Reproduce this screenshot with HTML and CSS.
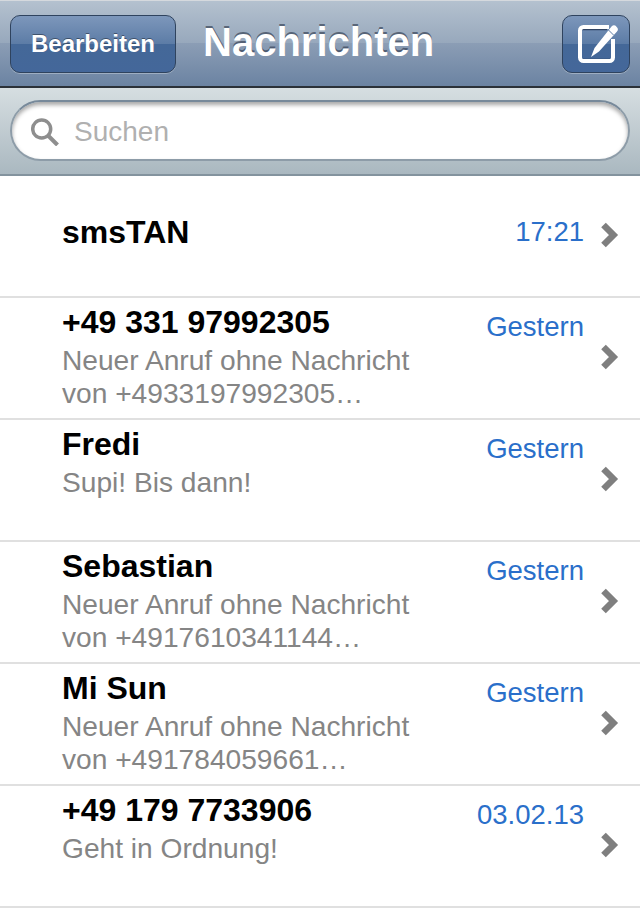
FILE: index.html
```html
<!DOCTYPE html>
<html lang="de">
<head>
    <meta charset="utf-8">
    <title>Nachrichten</title>
    <link rel="stylesheet" href="styles.css">
</head>
<body>
    <header class="navbar">
        <button class="nav-btn edit-btn">Bearbeiten</button>
        <h1 class="nav-title">Nachrichten</h1>
        <button class="nav-btn compose-btn" aria-label="Neue Nachricht">
            <svg width="68" height="58" viewBox="0 0 68 58">
                <path d="M20 14.500H45M20 44.500H49" stroke="#2f4363" stroke-width="1.500"/>
                <path d="M47 12H21.500a3.500 3.500 0 0 0-3.500 3.500v27a3.500 3.500 0 0 0 3.500 3.500h26a3.500 3.500 0 0 0 3.500-3.500V24" fill="none" stroke="#fff" stroke-width="4"/>
                <path d="M49.500 11.500a3.500 3.500 0 0 1 5 .200 3.500 3.500 0 0 1 .300 5L37 36.500 29 42l3.500-9z" fill="#fff"/>
                <path d="M46.500 15l5 5" stroke="#5b7ba5" stroke-width="1"/>
            </svg>
        </button>
    </header>

    <div class="searchbar">
        <div class="search-field">
            <svg class="search-icon" width="28" height="28" viewBox="0 0 28 28">
                <circle cx="10.700" cy="11" r="9" fill="none" stroke="#8e8e8e" stroke-width="3.500"/>
                <path d="M17 17.500l9.500 9.500" stroke="#8e8e8e" stroke-width="4"/>
            </svg>
            <span>Suchen</span>
        </div>
    </div>

    <ul class="list">
        <li class="row single">
            <div class="text"><div class="name">smsTAN</div></div>
            <div class="date">17:21</div>
            <svg class="chevron" width="18" height="26" viewBox="0 0 18 26"><path d="M2.500 3L12.500 13 2.500 23" fill="none" stroke="#7f7f7f" stroke-width="6.500"/></svg>
        </li>
        <li class="row">
            <div class="text">
                <div class="name">+49 331 97992305</div>
                <div class="preview">Neuer Anruf ohne Nachricht<br>von +4933197992305…</div>
            </div>
            <div class="date">Gestern</div>
            <svg class="chevron" width="18" height="26" viewBox="0 0 18 26"><path d="M2.500 3L12.500 13 2.500 23" fill="none" stroke="#7f7f7f" stroke-width="6.500"/></svg>
        </li>
        <li class="row">
            <div class="text">
                <div class="name">Fredi</div>
                <div class="preview">Supi! Bis dann!</div>
            </div>
            <div class="date">Gestern</div>
            <svg class="chevron" width="18" height="26" viewBox="0 0 18 26"><path d="M2.500 3L12.500 13 2.500 23" fill="none" stroke="#7f7f7f" stroke-width="6.500"/></svg>
        </li>
        <li class="row">
            <div class="text">
                <div class="name">Sebastian</div>
                <div class="preview">Neuer Anruf ohne Nachricht<br>von +4917610341144…</div>
            </div>
            <div class="date">Gestern</div>
            <svg class="chevron" width="18" height="26" viewBox="0 0 18 26"><path d="M2.500 3L12.500 13 2.500 23" fill="none" stroke="#7f7f7f" stroke-width="6.500"/></svg>
        </li>
        <li class="row">
            <div class="text">
                <div class="name">Mi Sun</div>
                <div class="preview">Neuer Anruf ohne Nachricht<br>von +491784059661…</div>
            </div>
            <div class="date">Gestern</div>
            <svg class="chevron" width="18" height="26" viewBox="0 0 18 26"><path d="M2.500 3L12.500 13 2.500 23" fill="none" stroke="#7f7f7f" stroke-width="6.500"/></svg>
        </li>
        <li class="row">
            <div class="text">
                <div class="name">+49 179 7733906</div>
                <div class="preview">Geht in Ordnung!</div>
            </div>
            <div class="date">03.02.13</div>
            <svg class="chevron" width="18" height="26" viewBox="0 0 18 26"><path d="M2.500 3L12.500 13 2.500 23" fill="none" stroke="#7f7f7f" stroke-width="6.500"/></svg>
        </li>
    </ul>
</body>
</html>
```
FILE: styles.css
```css
* {
    box-sizing: border-box;
}

body {
    margin: 0;
    font-family: "Liberation Sans", Arial, sans-serif;
    background-color: #fff;
}

.navbar {
    display: flex;
    align-items: center;
    justify-content: space-between;
    height: 88px;
    padding: 0 10px;
    border-top: 1px solid #d5d9de;
    border-bottom: 2px solid #2b3138;
    background: linear-gradient(#b4c1cf, #97a8bc 50%, #8b9db5 50%, #6b83a2);
}

.nav-btn {
    height: 58px;
    padding: 0;
    border: 1px solid #2f435e;
    border-radius: 10px;
    background: linear-gradient(#7d97bb, #5c7ca6 50%, #446898 50%, #44679a);
    box-shadow: 0 1px 0 rgba(255,255,255,0.3);
    color: #fff;
}

.edit-btn {
    width: 166px;
    font-family: inherit;
    font-size: 24px;
    font-weight: bold;
    text-shadow: 0 -1px 0 rgba(0,0,0,0.4);
}

.compose-btn {
    width: 68px;
}

.compose-btn svg {
    display: block;
    margin: -1px;
}

.nav-title {
    flex: 1;
    margin: 0 0 2px 27px;
    color: #fff;
    font-size: 40px;
    font-weight: bold;
    text-shadow: 0 -2px 0 rgba(40,50,70,0.6);
}

.searchbar {
    height: 88px;
    padding: 12px 10px 0;
    border-bottom: 2px solid #83939e;
    background: linear-gradient(#d6dee1, #aab8c0);
}

.search-field {
    display: flex;
    align-items: center;
    gap: 15px;
    height: 61px;
    padding: 3px 0 0 19px;
    border: 2px solid #8d9ca8;
    border-top-color: #77899a;
    border-radius: 31px;
    background-color: #fff;
    box-shadow: inset 0 3px 4px rgba(0,0,0,0.35);
    color: #b0b0b0;
    font-size: 28px;
}

.list {
    margin: 0;
    padding: 0;
    list-style: none;
}

.row {
    display: flex;
    align-items: center;
    height: 122px;
    padding: 0 21px 0 62px;
    border-bottom: 2px solid #e0e0e0;
}

.text {
    flex: 1;
    align-self: flex-start;
    padding-top: 2px;
}

.name {
    color: #000;
    font-size: 32px;
    font-weight: bold;
    line-height: 44px;
}

.preview {
    margin-top: 1px;
    color: #858585;
    font-size: 28.150px;
    line-height: 32.600px;
}

.date {
    align-self: flex-start;
    margin-right: 17px;
    padding-top: 13px;
    color: #2a6fca;
    font-size: 27.500px;
}

.row.single .text,
.row.single .date {
    align-self: center;
    padding-top: 0;
    padding-bottom: 8px;
}

.chevron {
    flex-shrink: 0;
    margin-bottom: 2px;
}
```
